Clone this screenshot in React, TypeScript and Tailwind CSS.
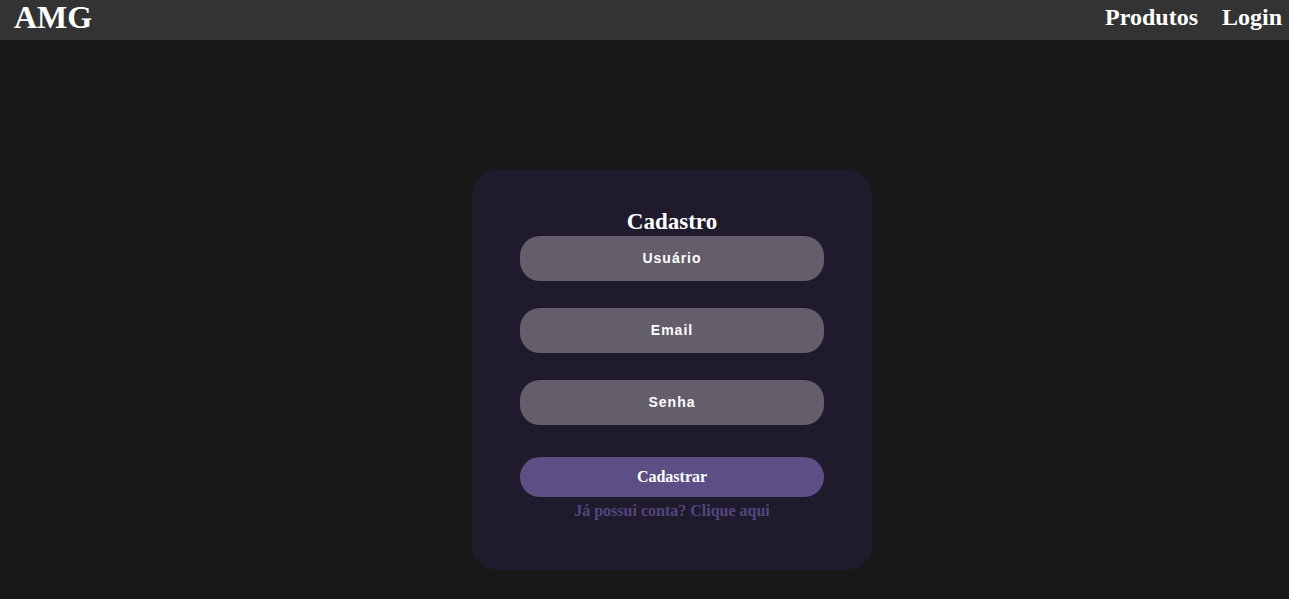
export default function App() {
  return (
    <div className="min-h-[599px] bg-[#181818] font-['Liberation_Serif',serif]">
      <header className="flex h-10 items-center justify-between bg-[#333333] pb-[7px] pl-[14px] pr-[7px] text-white">
        <h1 className="text-[32px] font-bold leading-none">AMG</h1>
        <nav className="flex gap-[24px] text-[24px] font-bold leading-none">
          <a href="#">Produtos</a>
          <a href="#">Login</a>
        </nav>
      </header>

      <div className="flex justify-center pl-[55px] pt-[130px]">
        <form className="flex h-[400px] w-[400px] flex-col items-center rounded-[25px] bg-[#201b2c] pt-[39px]">
          <h2 className="text-[23px] font-bold leading-[26px] text-white">Cadastro</h2>
          <div className="mt-[1px] flex flex-col gap-[27px]">
            <input
              type="text"
              placeholder="Usuário"
              className="h-[45px] w-[304px] rounded-[20px] bg-[#635e69] pb-[2px] text-center font-['Liberation_Sans',sans-serif] text-[14px] font-bold tracking-[1px] text-white outline-none placeholder:text-white"
            />
            <input
              type="email"
              placeholder="Email"
              className="h-[45px] w-[304px] rounded-[20px] bg-[#635e69] pb-[2px] text-center font-['Liberation_Sans',sans-serif] text-[14px] font-bold tracking-[1px] text-white outline-none placeholder:text-white"
            />
            <input
              type="password"
              placeholder="Senha"
              className="h-[45px] w-[304px] rounded-[20px] bg-[#635e69] pb-[2px] text-center font-['Liberation_Sans',sans-serif] text-[14px] font-bold tracking-[1px] text-white outline-none placeholder:text-white"
            />
          </div>
          <button
            type="button"
            className="mt-[32px] h-[40px] w-[304px] rounded-[20px] bg-[#5c4f85] text-[16px] font-bold text-white"
          >
            Cadastrar
          </button>
          <a href="#" className="mt-[5px] text-[16px] font-bold leading-[18px] text-[#514680]">
            Já possui conta? Clique aqui
          </a>
        </form>
      </div>
    </div>
  );
}
